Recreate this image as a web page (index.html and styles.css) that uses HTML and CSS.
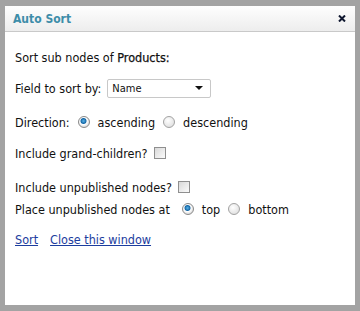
FILE: index.html
```html
<!DOCTYPE html>
<html lang="en">
<head>
  <meta charset="UTF-8">
  <title>Auto Sort</title>
  <link rel="stylesheet" href="styles.css">
</head>
<body>
  <!-- Sort dialog -->
  <div class="dialog">
    <div class="dialog-header">
      <span class="dialog-title">Auto Sort</span>
      <a class="dialog-close" href="#" title="Close">
        <svg width="8" height="7" viewBox="0 0 8 7">
          <path d="M1 0.5 L7 6.5 M7 0.5 L1 6.5" stroke="#101830" stroke-width="2"/>
        </svg>
      </a>
    </div>

    <form class="dialog-body">
      <div class="row">Sort sub nodes of <b>Products:</b></div>

      <div class="row row-field">
        <label for="sortField">Field to sort by:</label>
        <div class="select">
          <span>Name</span>
          <svg width="8" height="4" viewBox="0 0 8 4"><path d="M0 0 L8 0 L4 4 Z" fill="#111"/></svg>
        </div>
      </div>

      <div class="row row-direction">
        <span>Direction:</span>
        <input type="radio" class="radio" name="direction" id="dirAsc" checked>
        <label for="dirAsc">ascending</label>
        <input type="radio" class="radio" name="direction" id="dirDesc">
        <label for="dirDesc">descending</label>
      </div>

      <div class="row row-children">
        <label for="grandChildren">Include grand-children?</label>
        <input type="checkbox" class="check" id="grandChildren">
      </div>

      <div class="row row-unpublished">
        <label for="unpublished">Include unpublished nodes?</label>
        <input type="checkbox" class="check" id="unpublished">
      </div>

      <div class="row row-place">
        <span>Place unpublished nodes at</span>
        <input type="radio" class="radio radio-wide" name="place" id="placeTop" checked>
        <label for="placeTop">top</label>
        <input type="radio" class="radio" name="place" id="placeBottom">
        <label for="placeBottom">bottom</label>
      </div>

      <div class="row row-links">
        <a href="#">Sort</a>
        <a href="#">Close this window</a>
      </div>
    </form>
  </div>
</body>
</html>
```

FILE: styles.css
```css
body {
  margin: 0;
  padding: 6px 5px;
  background: #a3a3a3;
  font-family: Tahoma, "DejaVu Sans Condensed", "DejaVu Sans", sans-serif;
  font-size: 12.5px;
  color: #111;
}
b {
  font-weight: normal;
  -webkit-text-stroke: 0.25px #111;
}
.dialog {
  width: 350px;
  height: 299px;
  background: #fff;
}
.dialog-header {
  height: 25px;
  display: flex;
  align-items: center;
  justify-content: space-between;
  padding: 0 9px 0 8px;
  background: linear-gradient(#fefefe, #ededed);
  border-bottom: 1px solid #c9c9c9;
  font-size: 12px;
}
.dialog-title {
  color: #3d8da9;
  font-weight: bold;
}
.dialog-close {
  display: flex;
}
.dialog-body {
  padding: 15px 10px 0;
}
.row {
  height: 20px;
  display: flex;
  align-items: center;
  white-space: pre;
}
.row-field {
  margin-top: 11px;
}
.row-direction,
.row-unpublished {
  margin-top: 14px;
}
.row-children {
  margin-top: 11px;
}
.row-place {
  margin-top: 2px;
}
.row-links {
  margin-top: 10px;
}
.select {
  width: 91px;
  height: 17px;
  margin-left: 6px;
  border: 1px solid #c8c8c8;
  border-radius: 2px;
  display: flex;
  align-items: center;
  justify-content: space-between;
  padding: 0 7px 0 4px;
  font-size: 11px;
}
.radio {
  appearance: none;
  width: 12px;
  height: 12px;
  margin: 0 8px 0 8px;
  border: 1px solid #a2a2a2;
  border-radius: 50%;
  background: radial-gradient(circle at 40% 35%, #fff, #d8d8d8);
  box-sizing: border-box;
}
.radio:checked {
  background: radial-gradient(circle at 45% 40%, #5ab4e8 0, #1769a8 2.5px, #fff 3.5px, #dcdcdc 6px);
  border-color: #8a8a8a;
}
.radio-wide {
  margin-left: 12px;
}
.check {
  appearance: none;
  width: 12px;
  height: 12px;
  margin: 0 0 0 6px;
  border: 1px solid #8f8f8f;
  background: linear-gradient(135deg, #d9d9d9, #fbfbfb);
  box-sizing: border-box;
}
.row-links a {
  color: #1c3d9e;
  margin-right: 12px;
}
```
